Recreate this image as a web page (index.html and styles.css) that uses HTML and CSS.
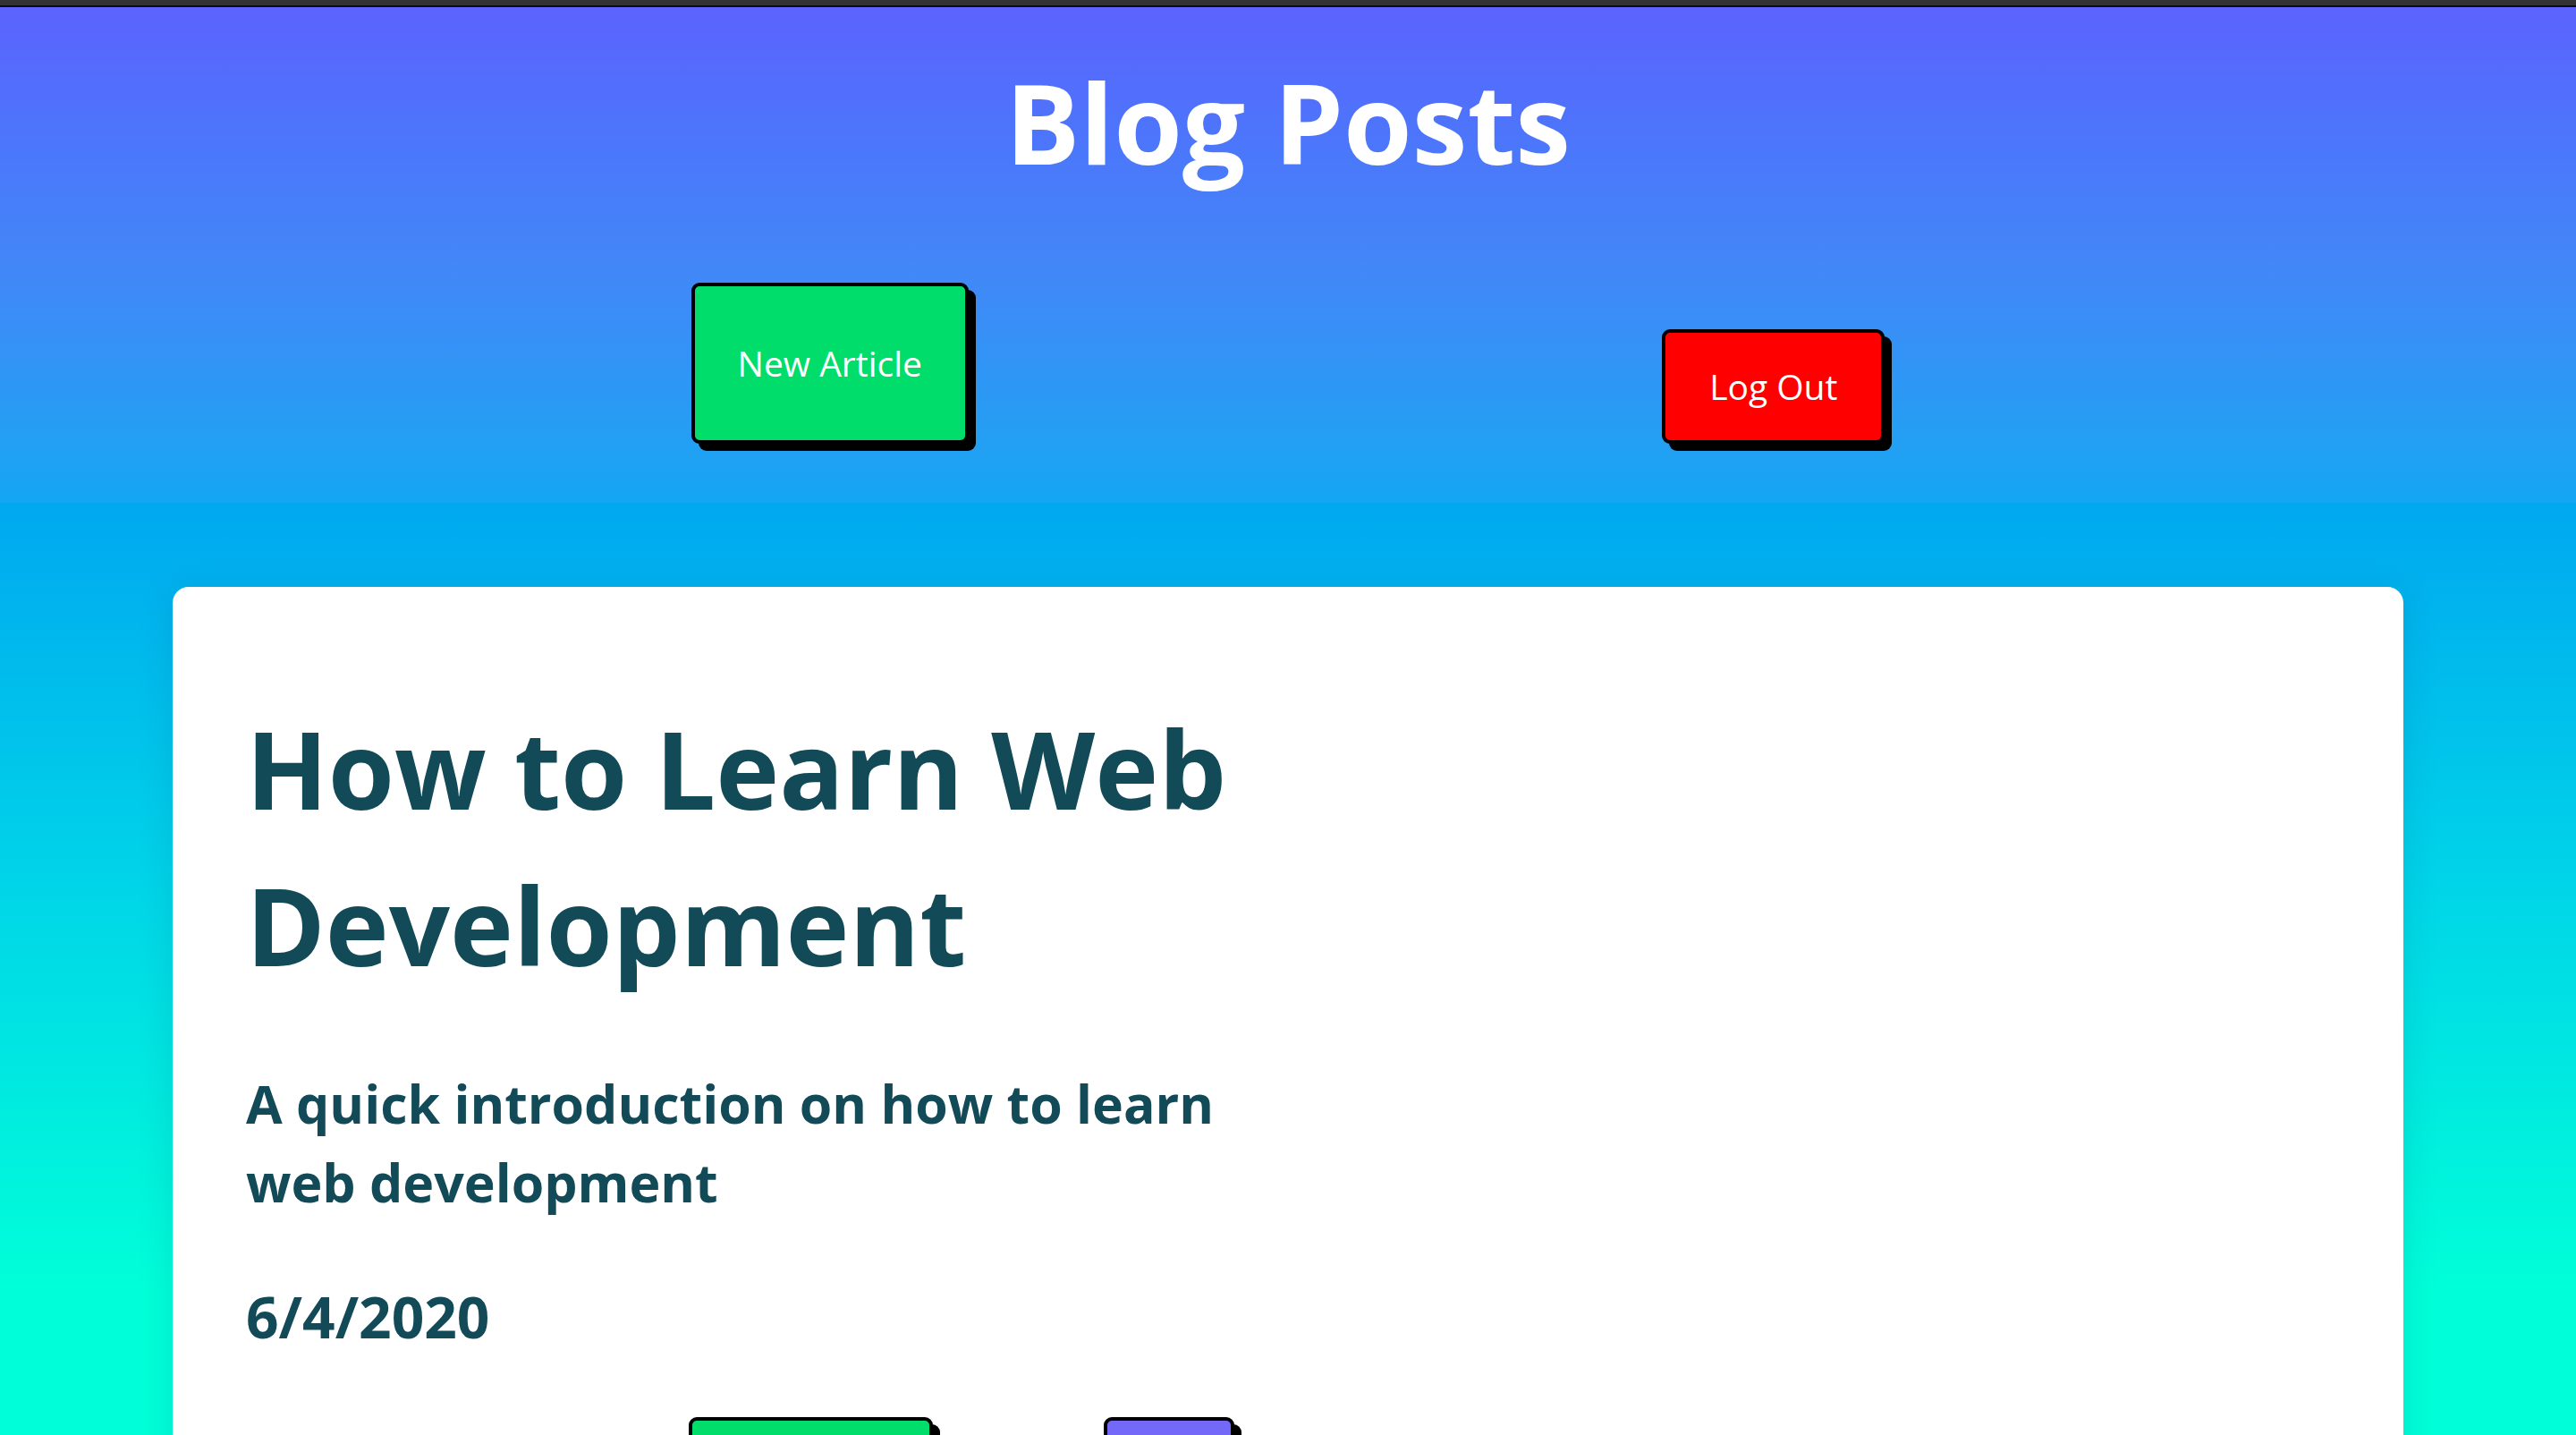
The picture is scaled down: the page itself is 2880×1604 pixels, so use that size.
FILE: index.html
```html
<!DOCTYPE html>
<html lang="en">
<head>
<meta charset="utf-8">
<title>Blog Posts</title>
<link rel="stylesheet" href="styles.css">
</head>
<body>
<div class="topbar"></div>
<header class="hero">
  <h1 class="hero-title">Blog Posts</h1>
  <nav class="hero-actions">
    <button class="btn btn-green btn-tall">New Article</button>
    <button class="btn btn-red">Log Out</button>
  </nav>
</header>
<main class="feed">
  <article class="card">
    <div class="card-body">
      <h2 class="post-title">How to Learn Web Development</h2>
      <h3 class="post-desc">A quick introduction on how to learn web development</h3>
      <p class="post-date">6/4/2020</p>
      <div class="post-actions">
        <button class="btn btn-green btn-read" aria-label="Read more"></button>
        <button class="btn btn-purple btn-edit" aria-label="Edit"></button>
      </div>
    </div>
  </article>
</main>
</body>
</html>
```

FILE: styles.css
```css
* { box-sizing: border-box; }

html, body {
  margin: 0;
  padding: 0;
}

body {
  font-family: "Open Sans", "Lato", sans-serif;
  background: #00ffd8;
  overflow: hidden;
  height: 1604px;
}

.topbar {
  height: 8px;
  background: #333335;
  border-bottom: 2px solid #0c0c0c;
}

.hero {
  height: 554px;
  padding-top: 43px;
  background: linear-gradient(to bottom, #5b63fe 0px, #4c76fb 150px, #4287f8 292px, #22a0f3 492px, #14a6f2 554px);
}

.hero-title {
  margin: 0;
  text-align: center;
  color: #ffffff;
  font-size: 124px;
  font-weight: 700;
  line-height: 170px;
}

.hero-actions {
  width: 2110px;
  margin: 95px auto 0;
  display: flex;
  justify-content: space-around;
  align-items: flex-end;
}

.btn {
  font-family: "Open Sans", "Lato", sans-serif;
  font-size: 39px;
  font-weight: 400;
  line-height: 54px;
  color: #ffffff;
  border: 4px solid #000000;
  border-radius: 9px;
  box-shadow: 8px 8px 0 #000000;
  padding: 33px 49px;
  cursor: pointer;
}

.btn-tall {
  padding: 59px 48px;
}

.btn-green { background: #00dd6b; }
.btn-red { background: #ff0000; }
.btn-purple { background: #7468f8; }

.feed {
  height: 1042px;
  padding: 94px 193px 0;
  background: linear-gradient(to bottom, #00a8f0 0px, #00d6e8 440px, #00ffd8 880px, #00ffd8 100%);
}

.card {
  background: #ffffff;
  border-radius: 18px;
  box-shadow: 0 4px 40px rgba(0, 40, 90, 0.12);
  min-height: 1200px;
  padding: 115px 82px 80px;
}

.card-body {
  width: 1160px;
  color: #124a58;
}

.post-title {
  margin: 0;
  font-size: 120px;
  font-weight: 700;
  line-height: 175px;
}

.post-desc {
  margin: 68px 0 0;
  font-size: 59px;
  font-weight: 700;
  line-height: 88px;
}

.post-date {
  margin: 63px 0 0;
  font-size: 64px;
  font-weight: 700;
  line-height: 88px;
}

.post-actions {
  margin-top: 68px;
  padding-left: 495px;
  display: flex;
  gap: 191px;
}

.btn-read { width: 273px; height: 128px; }
.btn-edit { width: 146px; height: 128px; }
```
